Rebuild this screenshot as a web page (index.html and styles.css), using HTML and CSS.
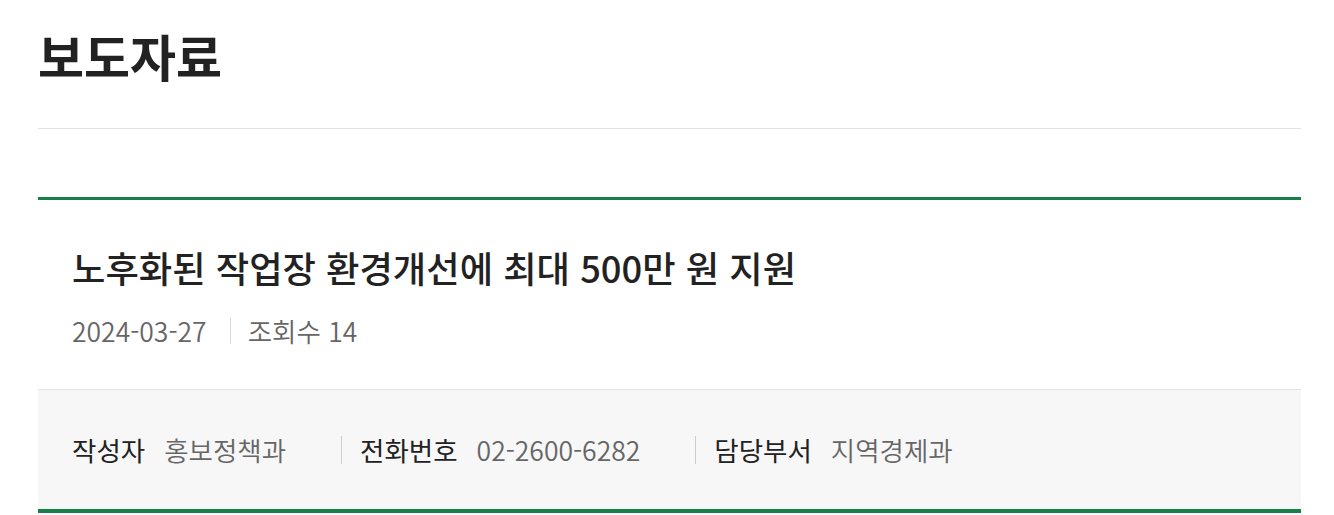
FILE: index.html
```html
<!DOCTYPE html>
<html lang="ko">

<head>
    <meta charset="UTF-8">
    <meta name="viewport" content="width=device-width, initial-scale=1.0">
    <title>보도자료</title>
    <link rel="stylesheet" href="styles.css">
</head>

<body>
    <div class="container">
        <div class="page-header">
            <h1>보도자료</h1>
        </div>

        <div class="article">
            <div class="article-head">
                <h2 class="article-title">노후화된 작업장 환경개선에 최대 500만 원 지원</h2>
                <div class="article-meta">
                    <span class="meta-item">2024-03-27</span>
                    <span class="meta-item">조회수 14</span>
                </div>
            </div>

            <ul class="article-info">
                <li class="info-item">
                    <span class="info-label">작성자</span>
                    <span class="info-value">홍보정책과</span>
                </li>
                <li class="info-item">
                    <span class="info-label">전화번호</span>
                    <span class="info-value">02-2600-6282</span>
                </li>
                <li class="info-item">
                    <span class="info-label">담당부서</span>
                    <span class="info-value">지역경제과</span>
                </li>
            </ul>
        </div>
    </div>
</body>

</html>
```

FILE: styles.css
```css
/* General Page Styles */
body {
    font-family: 'Noto Sans CJK KR', 'Noto Sans', sans-serif;
    background-color: #fff;
    color: #222;
    margin: 0;
    padding: 0;
}

/* Layout */
.container {
    width: 1263px;
    margin: 0 0 0 38px;
}

.page-header {
    padding: 25px 0 43px;
    border-bottom: 1px solid #e2e2e2;
}

.page-header h1 {
    margin: 0;
    font-size: 50px;
    font-weight: 700;
    line-height: 60px;
    color: #222;
}

/* Article */
.article {
    margin-top: 68px;
    border-top: 3px solid #17804a;
    border-bottom: 4px solid #17804a;
}

.article-head {
    padding: 42px 34px 38px;
}

.article-title {
    margin: 0;
    font-size: 36.3px;
    font-weight: 500;
    line-height: 50px;
    color: #222;
}

.article-meta {
    margin-top: 19px;
    display: flex;
    align-items: center;
    font-size: 26.5px;
    font-weight: 350;
    line-height: 40px;
    color: #666;
}

.meta-item + .meta-item {
    margin-left: 23px;
    padding-left: 17px;
    border-left: 1px solid #d8d8d8;
    line-height: 26px;
}

/* Info row */
.article-info {
    list-style: none;
    margin: 0;
    padding: 40px 34px 39px;
    display: flex;
    align-items: center;
    background-color: #f7f7f7;
    border-top: 1px solid #e2e2e2;
    font-size: 26.5px;
    line-height: 40px;
}

.info-item {
    display: flex;
    align-items: center;
}

.info-item + .info-item {
    margin-left: 55px;
    padding-left: 18px;
    border-left: 1px solid #ccc;
    line-height: 28px;
}

.info-label {
    color: #222;
    margin-right: 19px;
}

.info-value {
    color: #666;
    font-weight: 350;
}
```
